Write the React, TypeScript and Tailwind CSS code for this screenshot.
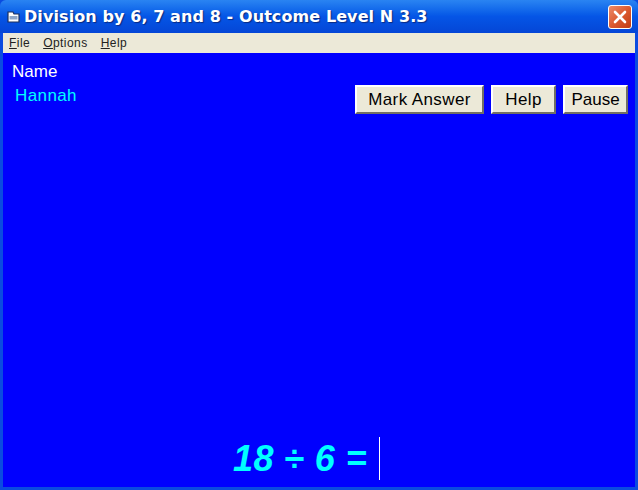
export default function App() {
  return (
    <div className="w-[638px] h-[490px] flex flex-col overflow-hidden bg-[#0a4be0] px-[3px] pb-[3px] font-['Liberation_Sans',sans-serif]">
      {/* Title bar */}
      <div className="-mx-[3px] h-[33px] shrink-0 flex items-center pl-[6px] pr-[6px] rounded-t-md bg-gradient-to-b from-[#2a84f2] via-[#0555e6] to-[#0546d6]">
        <svg width="15" height="14" viewBox="0 0 15 14" className="shrink-0 mr-[3px] mt-[1px]">
          <path d="M2 2h5l1 2h5v8H2z" fill="#fff" stroke="#1c2f5c" strokeWidth="1.2" />
          <path d="M3.5 6h8v3.5h-8z" fill="#8fa6c8" />
        </svg>
        <span className="mt-[1px] font-['DejaVu_Sans',sans-serif] font-bold text-[16px] tracking-[0.09px] text-white whitespace-nowrap [text-shadow:1px_1px_1px_#0a2a80]">
          Division by 6, 7 and 8 - Outcome Level N 3.3
        </span>
        <button className="ml-auto w-[24px] h-[24px] flex items-center justify-center rounded-[3px] border border-white bg-gradient-to-br from-[#ec8a68] via-[#dc5a30] to-[#c03c14]">
          <svg width="16" height="16" viewBox="0 0 16 16">
            <path d="M3 3l10 10M13 3L3 13" stroke="#fff" strokeWidth="2.6" strokeLinecap="round" />
          </svg>
        </button>
      </div>

      {/* Menu bar */}
      <div className="h-[20px] shrink-0 flex items-center gap-[13px] pl-[6px] bg-[#ece9d8] text-[12px] tracking-[0.45px] text-[#222]">
        <span><u>F</u>ile</span>
        <span><u>O</u>ptions</span>
        <span><u>H</u>elp</span>
      </div>

      {/* Form */}
      <div className="flex-1 flex flex-col justify-between bg-[#0000fe]">
        <div className="flex justify-between pl-[9px] pr-[7px] pt-[10px]">
          <div className="flex flex-col">
            <span className="text-[17px] leading-[18px] text-white">Name</span>
            <span className="mt-[6px] ml-[3px] text-[17px] leading-[18px] text-[#00ffff] tracking-[0.4px]">Hannah</span>
          </div>
          <div className="flex gap-[7px] mt-[22px] text-[17px] text-black">
            <button className="w-[129px] h-[29px] bg-[#ece9d8] border-2 border-t-white border-l-white border-r-[#716f64] border-b-[#716f64] tracking-[0.4px]">Mark Answer</button>
            <button className="w-[65px] h-[29px] bg-[#ece9d8] border-2 border-t-white border-l-white border-r-[#716f64] border-b-[#716f64] tracking-[0.4px]">Help</button>
            <button className="w-[65px] h-[29px] bg-[#ece9d8] border-2 border-t-white border-l-white border-r-[#716f64] border-b-[#716f64]">Pause</button>
          </div>
        </div>
        <div className="flex items-center pl-[230px] mb-[7px] h-[44px]">
          <span className="mt-[2px] font-bold italic text-[36px] leading-none text-[#00ffff] tracking-[0.4px] whitespace-nowrap w-[146px]">18 ÷ 6 =</span>
          <span className="w-px h-[43px] bg-white" />
        </div>
      </div>
    </div>
  );
}
